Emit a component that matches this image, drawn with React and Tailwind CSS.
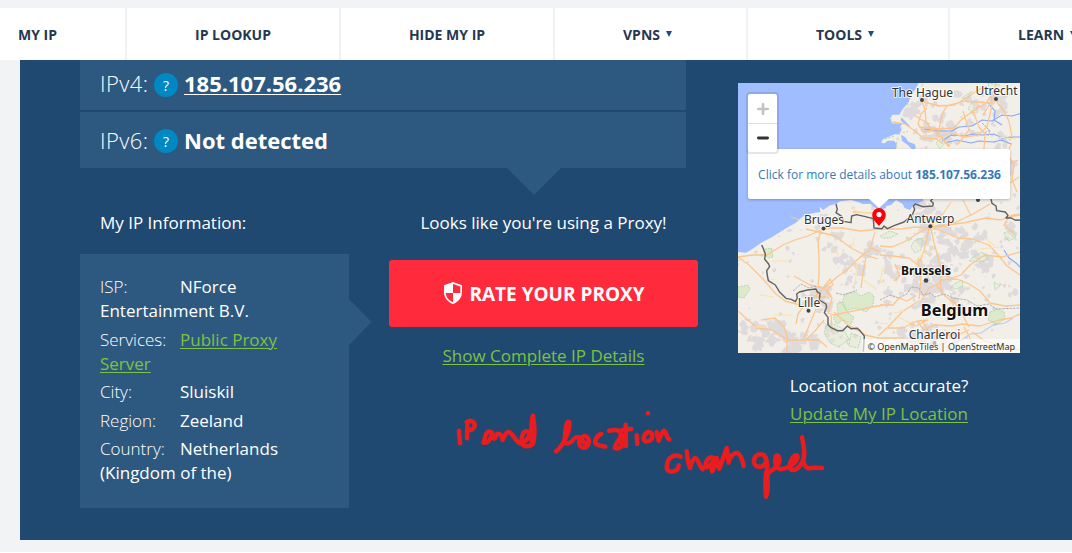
const NAV = [
  { label: "MY IP", cell: "w-[127px] pl-[18px] border-r-2" },
  { label: "IP LOOKUP", cell: "w-[214px] justify-center border-r-2" },
  { label: "HIDE MY IP", cell: "w-[214px] justify-center border-r-2" },
  { label: "VPNS", cell: "w-[193px] pl-[68px] border-r-2", menu: true },
  { label: "TOOLS", cell: "w-[202px] pl-[68px] border-r-2", menu: true },
  { label: "LEARN", cell: "w-[202px] pl-[68px]", menu: true },
];

function Nav() {
  return (
    <nav className="flex h-[52px] w-full overflow-hidden bg-white text-[14px] font-bold text-[#26384f]">
      {NAV.map((item) => (
        <div key={item.label} className={`flex shrink-0 items-center border-[#f0f2f4] pt-px ${item.cell}`}>
          <span>{item.label}</span>
          {item.menu && (
            <svg className="ml-[6px] -mt-px h-[6px] w-[6px] shrink-0" viewBox="0 0 6 6">
              <path d="M0 0H6L3 6Z" fill="#1d4d80" />
            </svg>
          )}
        </div>
      ))}
    </nav>
  );
}

function Help() {
  return (
    <span className="mx-[6px] mt-[2px] flex size-6 items-center justify-center rounded-full bg-[#0088c2] pt-px text-[14px] font-normal">?</span>
  );
}

function InfoRow({ label, children }) {
  return (
    <p className="mb-[4.6px]">
      <span className="inline-block w-20 font-light">{label}</span>
      {children}
    </p>
  );
}

function seeded(seed) {
  let s = seed;
  return () => {
    s = (s * 16807) % 2147483647;
    return s / 2147483647;
  };
}

const rand = seeded(71);

function blot(x, y, r) {
  const points = [];
  for (let k = 0; k < 8; k++) {
    const a = (k / 8) * Math.PI * 2;
    const q = r * (0.45 + rand() * 0.75);
    points.push(`${(x + Math.cos(a) * q).toFixed(1)},${(y + Math.sin(a) * q).toFixed(1)}`);
  }
  return points.join(" ");
}

// Built-up areas: centre x, centre y, spread, number of patches
const CITIES = [
  [173, 28, 10, 12], [190, 22, 9, 6], [205, 45, 15, 26], [192, 50, 9, 10], [258, 22, 12, 16], [240, 25, 8, 5], [225, 15, 8, 4],
  [235, 45, 9, 5], [268, 60, 10, 6], [275, 85, 6, 8], [190, 140, 14, 18], [188, 125, 8, 6], [205, 165, 24, 40], [225, 160, 16, 20],
  [190, 195, 18, 38], [183, 210, 16, 20], [205, 185, 14, 18], [200, 200, 12, 12], [245, 180, 10, 12], [240, 148, 10, 8],
  [134, 167, 7, 14], [128, 176, 7, 4], [120, 190, 12, 6], [107, 180, 10, 6], [72, 218, 10, 12], [84, 212, 9, 12], [88, 225, 8, 8],
  [38, 248, 13, 24], [22, 254, 12, 16], [54, 262, 13, 18], [72, 256, 9, 10], [10, 243, 9, 8], [95, 250, 9, 8],
  [195, 256, 14, 16], [165, 257, 11, 10], [212, 260, 8, 6], [175, 249, 10, 8], [85, 141, 8, 6], [96, 158, 9, 4],
  [55, 132, 7, 3], [230, 210, 18, 10], [150, 202, 18, 12], [270, 205, 9, 6], [272, 150, 8, 6], [155, 180, 12, 10],
];

const patches = CITIES.flatMap(([cx, cy, spread, n]) =>
  Array.from({ length: n }, () => {
    const a = rand() * Math.PI * 2;
    const d = Math.sqrt(rand()) * spread;
    return blot(cx + Math.cos(a) * d, cy + Math.sin(a) * d, 1.5 + rand() * 4);
  })
);

const hamlets = Array.from({ length: 330 }, () => blot(rand() * 282, rand() * 270, 0.8 + rand() * 2.1));

const TOWNS = [
  { name: "The Hague", x: 184.500, y: 13.500, dot: [184, 17] },
  { name: "Utrecht", x: 258.500, y: 12, dot: [258, 16] },
  { name: "Bruges", x: 86, y: 141, dot: [85.500, 145.500] },
  { name: "Antwerp", x: 192.500, y: 139.500, dot: [192.300, 143.300] },
  { name: "Lille", x: 71, y: 223.800, dot: [70.500, 227.700] },
  { name: "Charleroi", x: 196.500, y: 256, dot: [196.500, 260] },
];

function MapCanvas() {
  return (
    <svg className="block h-[270px] w-[282px]" viewBox="0 0 282 270">
      <rect width="282" height="270" fill="#f2efe9" />
      <g fill="#dfdadb">
        {patches.map((p, i) => <polygon key={i} points={p} />)}
        {hamlets.map((p, i) => <polygon key={i} points={p} />)}
      </g>

      <g fill="#dce9cb" stroke="#a2d9a0" strokeWidth="0.8" strokeDasharray="2 1">
        <path d="M107 211l11-2 5 4 8-4 5 4-1 9-7 7-9-4-11 2-4-7zM99 221l6-2 5 11 6 4-3 7-8-4-6 4-4-6 5-5zM0 204l10-2 2 4-6 9-6-1zM27 166l6-1 2 9-5 1-4-4z" />
        <path d="M252 229l8-3 6 3 1 7-8 5-9-4z" />
        <g fillOpacity="0.35">
          <path d="M218 200l6-3 1 6-7 3-5-2zM234 175l10-6 7 7-8 3-12-1zM176 158l9-3-2 12-6 3-4-6zM266 150l8-3 4 8-8 3zM142 153l10-5 8 3-9 4-6 0z" />
          <path d="M90 240l8 2 8 5 5 9-10 8-9-4-6-10zM113 250l10 4-3 11-9-2zM256 199l6 4-5 4zM168 154l6 2-4 2zM224 15l10-7-4 7zM233 20l4 3-3 6-4-3zM198 60l5-5 5 4-6 7zM250 0l12 2-5 5-6-2z" />
        </g>
      </g>

      <g transform="translate(-2 -3) scale(0.33333)">
        <path fill="#9fbdff" d="M6 9H548L538 28 528 40 518 66 500 88 490 104 468 104 463 115 468 130 482 132 488 128 498 132 492 142 496 150 490 164 478 162 464 168 440 178 436 188 446 190 454 182 474 182 482 192 480 206 486 220 450 240V385L432 388 414 382 404 372 380 372 366 366 345 360 312 364 300 372 282 376 270 384 262 390 250 380 254 396 238 398 205 405 180 428 150 445 110 470 76 488 50 506 30 518 6 516Z" />
        <path fill="#9fbdff" d="M495 164L508 172 518 186 536 192 540 204 530 210 514 194 498 182ZM496 112L522 138 520 142 494 122ZM432 352L446 380 466 374 480 360 500 372 506 384 522 390 534 372 548 370 562 362 560 352Z" />
        <path fill="none" stroke="#a2d9a0" strokeWidth="2.500" strokeDasharray="7 4" d="M466 106L464 128 498 132M436 180L476 168M482 186L482 206M500 158L516 154" />
      </g>

      <g fill="none" stroke="#86a8f6" strokeWidth="1.1">
        <path d="M186 46l14 2 14 0 7-4 13-1 10-6 10 1 10-6 10 1 10-3M204 58l9-6 13 1 9-2 9 1 12-1 8 4 11-1 7 0M207 60l12-3 14 3 8-2 14 1 9-2 9 4M249 19l8 9-1 9 8 5M266 167l5 8 7 5 4 4" />
        <path d="M212 260l12-3 8-6 11-1 12-8 12-2 8-5" strokeOpacity="0.5" />
      </g>

      <g fill="none" stroke="#fcc68e" strokeWidth="1.300" strokeLinejoin="round">
        <path d="M155 39l12 2 10 7 8 7 14 1 6 5M184 18l3 9 1 12 6 8 8 5 9 12M186 19l15 4 15-1 9-4 13 1 14 1M189 25l-6 6-3 10 6 8 14-3 16-1 7-8 12-9 13-8 6-9M199 53l3-11 2-11 5-8 11-3 11-7 14-9M200 54l13-4 14 4 13-2 9-8 3-13 2-9-1-11M203 55l9 8M246 66l1-15-6-7-6-16 7-6M258 0l-3 16-10 16M258 18l8 10 5 10 3 16M176 32l8 5 8 4M225 28l6 19-12 15M181 44l21 2" />
        <path d="M0 174l15-2 14 0 16-10 12-5 13-4 13-6M0 174l11 8 14 14 13 15 9 7 15 4M83 147l-3 11 1 15 0 20-1 9M53 134l8 3M68 146l13 3 16 4 16 12 14 7 10 3M85 145l19 0 18 3 20-2 21 0 14-2 15 1M125 172l-6 5-10 10-10 7-14 12M128 174l-3 16-2 15M133 174l7 2M56 193l16 9 14 3 8 10-4 15 6 2 24-5 14-3 12-2" />
        <path d="M85 205l7-9 3 6-6 4 4 7M85 206l-9 8-8 6-8 11-2 10M0 228l10 9 9 8 15 2 16 10 18 0 9-9 9-11M50 257l-4-13-9-9-14 2M49 257v13M70 257l11 0 8 7M93 232l1 16M96 229l13 12 18 11 13 3 26 0M78 226l-12 29M132 165l8 3M71 213l17 1" />
        <path d="M142 163l12 1 12-5 16-10 10-5M142 172l13 1 16 2 14 11M193 146l3 14 4 14 4 17-2 7 2 13M193 144l17-1 25-12 17-10M193 144l27 11 14 1 17 6 10 11 8 10 13 9M204 191l10 4 9-3 9-10 15-10 17 2 18-5M142 222h13l6-7 8 3 9-5M201 197l18-1 12 5 11 7 10 12 15 3 15-1M198 202l9 11 9 7-7 18M181 216l2-19-3-22M204 199l-13 6-8 13M199 192l-14-5-4 6M191 145l-5 23-4 10" />
        <path d="M150 245l15 0 14-7 7 9 10-5 18 1 10-2 18 2 19-6 12-2 9-4M140 253l10-9 14-15 15-10M184 237l9 17 1 16M226 244l5 9 6 17M214 216l8 11 9 17M234 249l13 9 10 3 25 6M180 238l10-1-12 6-8-4M200 252l20 0 11-5M155 266l15-7 19-1M156 198l6-5-5-12" />
        <path d="M274 60l-5 10 7 12-2 15 5 12M270 82l10-5M272 100l9-6M275 150l-9-8 5-8 11-2M190 144l35-4 23-5 15 2 12-5 7-1M115 129l20 1" />
        <path d="M137 149l-3 10-3 10M122 174l12-9 8 4M213 119l-8 12-12 12M225 117l8 16" strokeOpacity="0.8" />
      </g>
      <g fill="none" stroke="#fbe3a8" strokeWidth="1.100">
        <path d="M34 178h17M22 212l14 2M29 197l8-1M54 232l-18 0M15 244l12 0M101 173l-5-6M138 206l-12-9M242 166l19-2M260 54l18 2M182 76l2-12M114 125l6 4 14 1M176 179l10-9 8-3M156 230l10-2M141 240l9 1M160 234l12 6M257 163l-9-7M116 155l-2 12M119 181l-2 22M145 185l-3 15" />
      </g>

      <path d="M98 210l8 2 13-5M142 217l10-5 9 3 8-4 4-7 8 1 4 7 8-2 4 4 9-3 9 4 14 2 10 6 12-2 7 5 24-1M55 208l8-7 8 4 7-2M244 40l8 8-2 5M247 50l5-3" fill="none" stroke="#b2afb0" strokeWidth="1" strokeDasharray="2.500 1" />

      <g transform="translate(-2 -3) scale(0.33333)" fill="none" stroke="#626262" strokeWidth="4.300" strokeLinejoin="round">
        <path d="M77 495L82 506 88 522 86 538 98 552 101 560 92 572 94 586 97 602 118 615 130 635 150 655 166 658 178 665 184 654 182 642 190 636 214 630 240 627 244 636 252 640 250 660 270 672 272 682 265 698 276 712 276 734 284 742 304 752 320 752 334 738 345 746 364 745 372 752 385 768 382 815" />
        <path d="M300 372L304 388 300 398 318 410 322 424 345 428 347 408 362 404 388 410 412 416 414 444 438 446 444 438 454 446 476 436 504 426 518 414 530 402 536 388 532 378 538 372 560 380 590 378 592 370 584 362 590 356" />
        <path d="M765 357L768 370 780 378 782 392 808 396 816 406 810 414 826 414 836 420 852 421" />
      </g>

      <g fontFamily='"Noto Sans", sans-serif' textAnchor="middle" fill="#333333" stroke="#ffffff" strokeWidth="2" strokeOpacity="0.75" strokeLinejoin="round" paintOrder="stroke">
        {TOWNS.map((t) => (
          <g key={t.name}>
            <text x={t.x} y={t.y} fontSize="12">{t.name}</text>
            <circle cx={t.dot[0]} cy={t.dot[1]} r="2" stroke="none" fill="#444" />
          </g>
        ))}
        <text x="188" y="191.500" fontSize="12" fontWeight="700" fill="#111">Brussels</text>
        <circle cx="188" cy="197.500" r="2.300" stroke="none" fill="#444" />
        <text x="216.500" y="233" fontSize="16.400" fontWeight="700" fill="#111">Belgium</text>
        <circle cx="240" cy="117" r="2" stroke="none" fill="#444" />
      </g>
    </svg>
  );
}

function MapCard() {
  return (
    <div className="relative h-[270px] w-[282px] overflow-hidden">
      <MapCanvas />
      <svg className="absolute left-[134px] top-[125px] h-[18px] w-[14px]" viewBox="0 0 14 18">
        <path d="M7 0a6.800 6.800 0 0 0-6.800 6.800C.2 11 3.500 14 7 18c3.500-4 6.800-7 6.800-11.200A6.800 6.800 0 0 0 7 0Z" fill="#fb0007" />
        <circle cx="7" cy="6.600" r="2.600" fill="#fff" />
      </svg>
      <div className="absolute left-[10px] top-[66px] flex h-[50px] w-[262px] items-center justify-center rounded-[2px] bg-white pl-px pt-[2px] text-[12px] text-[#3379b7] shadow-[0_1px_3px_rgba(0,0,0,0.25)]">
        <span className="whitespace-nowrap">Click for more details about <b className="font-bold">185.107.56.236</b></span>
      </div>
      <svg className="absolute left-[131px] top-[116px] h-[9px] w-[20px]" viewBox="0 0 20 9">
        <path d="M0 0H20L10 9Z" fill="#fff" />
      </svg>
      <div className="absolute left-[8px] top-[9px] flex w-[33px] flex-col overflow-hidden rounded-[4px] border-2 border-black/10 bg-white bg-clip-padding">
        <div className="flex h-[30px] items-center justify-center border-b border-[#ddd]">
          <svg className="size-3" viewBox="0 0 12 12"><path d="M6 1.200V10.800M1.200 6H10.800" stroke="#c2c2c2" strokeWidth="2.600" strokeLinecap="round" /></svg>
        </div>
        <div className="flex h-[28px] items-center justify-center">
          <svg className="size-3" viewBox="0 0 12 12"><path d="M1.400 6H10.600" stroke="#333" strokeWidth="2.800" strokeLinecap="round" /></svg>
        </div>
      </div>
      <div className="absolute bottom-0 right-0 flex h-[14px] items-center bg-white/60 px-[5px] pt-px text-[9px] whitespace-nowrap text-[#333]" style={{ fontFamily: '"Noto Sans", sans-serif' }}>
        © OpenMapTiles | OpenStreetMap
      </div>
    </div>
  );
}

function Ink() {
  return (
    <svg className="pointer-events-none absolute left-[440px] top-[400px] h-[110px] w-[400px]" viewBox="0 0 1200 330" fill="none" stroke="#e71d1f" strokeWidth="13.500" strokeLinecap="round" strokeLinejoin="round">
      <path d="M57 92L60 130M82 68L81 115M80 66C92 58 106 66 104 78C102 88 92 91 84 90" />
      <path d="M156 98C140 86 136 106 131 128C144 130 153 116 156 100C158 112 162 122 166 112C170 98 182 94 188 120C194 104 202 92 210 98C222 106 226 124 240 130C262 126 272 104 266 96C250 88 242 108 246 130C254 144 274 140 280 128C286 100 283 70 279 47C272 62 274 96 276 128" />
      <path d="M348 154C368 140 392 92 388 66C378 62 376 90 374 118C374 136 386 132 396 124C402 112 418 106 420 116C412 136 424 146 438 142C450 132 450 114 436 108C426 106 420 122 436 130M484 102C470 106 462 124 468 132C476 138 488 138 496 140" />
      <path d="M507 92C530 88 546 90 542 108C538 124 524 130 524 144C536 150 542 140 546 138M546 106L544 138M557 74L558 138M546 90L574 87M590 106L592 132M624 39L624 40M622 98C610 104 608 118 616 124C630 126 640 116 636 102C632 94 622 94 618 100M650 96L656 122C660 112 666 96 672 92C680 94 678 114 688 118" />
      <path d="M722 170C704 162 686 170 682 190C676 210 686 218 700 214C712 212 716 204 716 196M740 154C742 174 745 192 750 204C754 188 758 176 766 174C776 178 778 200 788 208M824 176C810 164 796 182 796 200C806 206 816 190 824 176C820 192 814 208 816 214C824 206 828 186 830 174C834 192 834 198 838 206C846 184 856 156 860 144C864 162 864 180 866 188C870 168 882 158 892 158C904 164 908 182 911 198" />
      <path d="M972 166C954 156 940 170 942 188C948 204 966 204 974 192C982 184 980 172 974 168C982 184 984 200 980 216" />
      <path d="M979 216C974 240 976 268 978 290C990 262 978 232 984 220C996 208 1012 204 1018 186C1020 172 1014 162 1008 168C1002 188 1006 204 1022 208C1042 206 1064 194 1072 176C1076 160 1062 164 1056 176C1046 196 1046 212 1064 210C1084 200 1094 178 1093 158C1092 142 1089 126 1086 112M1092 160C1088 180 1090 198 1104 205C1118 204 1130 202 1146 204" />
    </svg>
  );
}

export default function App() {
  return (
    <div className="relative h-[553px] w-[1072px] overflow-hidden border-b border-white bg-[#f1f3f5] pt-2 text-white" style={{ fontFamily: '"Open Sans", sans-serif' }}>
      <Nav />
      <main className="ml-5 flex h-[480px] bg-[#1f4971] pl-[60px]">
        <section className="w-[658px]">
          <div className="relative w-[606px] text-[22px]">
            <div className="flex h-[50px] items-center bg-[#2d5980] pb-[3px] pl-5">
              <span className="w-[48px] font-light tracking-[0.4px]">IPv4:</span><Help />
              <span className="font-bold underline decoration-1 underline-offset-[2px]">185.107.56.236</span>
            </div>
            <div className="mt-[2px] flex h-14 items-center bg-[#2d5980] pl-5">
              <span className="w-[48px] font-light tracking-[0.4px]">IPv6:</span><Help />
              <span className="font-bold">Not detected</span>
            </div>
            <svg className="absolute left-[427px] top-[108px] h-[27px] w-[54px]" viewBox="0 0 54 27"><path d="M0 0H54L27 27Z" fill="#2d5980" /></svg>
          </div>
          <div className="flex w-[618px] justify-between text-[17px] leading-[24px]">
            <div className="w-[269px] pt-[43px]">
              <h2 className="mb-[19px] pl-5">My IP Information:</h2>
              <div className="relative h-[254px] bg-[#2d5980] px-5 pt-[21px]">
                <InfoRow label="ISP:">NForce<br />Entertainment B.V.</InfoRow>
                <InfoRow label="Services:"><a className="text-[#7dc242] underline decoration-1 underline-offset-2">Public Proxy<br />Server</a></InfoRow>
                <InfoRow label="City:">Sluiskil</InfoRow>
                <InfoRow label="Region:">Zeeland</InfoRow>
                <InfoRow label="Country:">Netherlands<br />(Kingdom of the)</InfoRow>
                <svg className="absolute left-[269px] top-[45px] h-[46px] w-[23px]" viewBox="0 0 23 46"><path d="M0 0L22.500 23L0 46Z" fill="#2d5980" /></svg>
              </div>
            </div>
            <div className="flex w-[309px] flex-col items-center pt-[43px]">
              <p>Looks like you're using a Proxy!</p>
              <button className="mt-[25px] flex h-[67px] w-full items-center justify-center gap-[7px] rounded-[3px] bg-[#ff2a3b] pl-[2px] text-[19px] font-bold">
                <svg className="-mt-[2px] h-[22px] w-[18px]" viewBox="0 0 18 22">
                  <path fillRule="evenodd" d="M9 0L18 3.300V10C18 15.500 14.500 20 9 22C3.500 20 0 15.500 0 10V3.300ZM9 2V11H1.700C2.200 15.500 5 18.600 9 20.200V11H16.300V4.500Z" fill="#fff" />
                </svg>
                RATE YOUR PROXY
              </button>
              <a className="mt-[17px] text-[#7dc242] underline decoration-1 underline-offset-2">Show Complete IP Details</a>
            </div>
          </div>
        </section>
        <aside className="flex w-[282px] flex-col items-center pt-[23px] text-[17px] leading-[28px]">
          <MapCard />
          <p className="mt-[19px]">Location not accurate?</p>
          <a className="text-[#7dc242] underline decoration-1 underline-offset-2">Update My IP Location</a>
        </aside>
      </main>
      <Ink />
    </div>
  );
}
